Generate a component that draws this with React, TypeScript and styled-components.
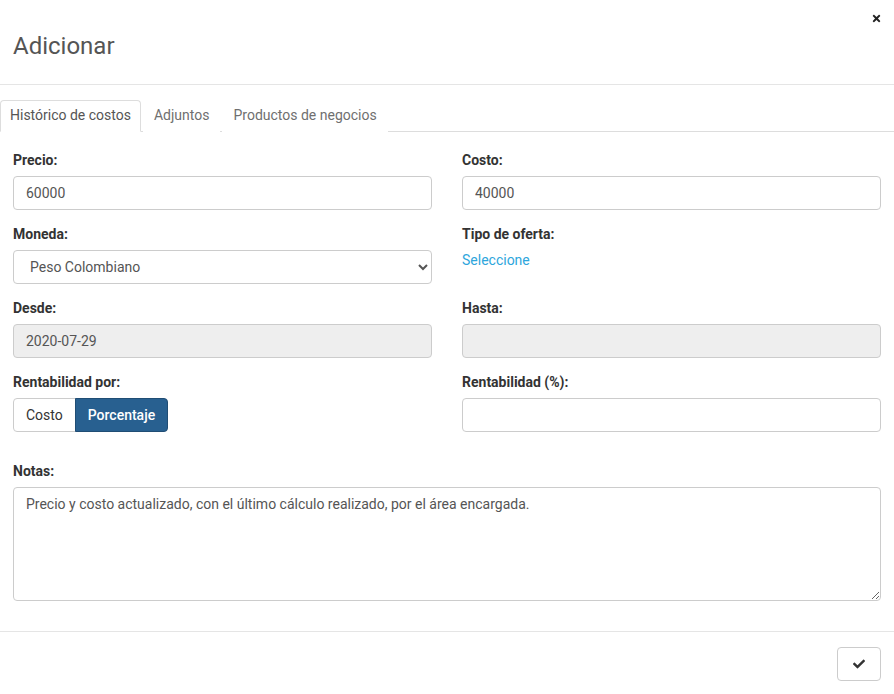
import React from "react";
import styled, { createGlobalStyle } from "styled-components";
import { FaCheck, FaTimes } from "react-icons/fa";

const GlobalStyle = createGlobalStyle`
  body {
    margin: 0;
    background: #fff;
    font-family: Roboto, "Liberation Sans", Arial, sans-serif;
    font-size: 14px;
    line-height: 20px;
    color: #333;
  }
  * { box-sizing: border-box; }
`;

const Modal = styled.div`
  width: 894px;
  background: #fff;
`;

const Header = styled.div`
  position: relative;
  padding: 32px 13px 24px;
  height: 85px;
  border-bottom: 1px solid #e5e5e5;
`;

const Title = styled.h4`
  margin: 0;
  font-size: 24px;
  line-height: 28px;
  font-weight: 400;
  color: #555;
`;

const Close = styled.button`
  position: absolute;
  top: 13px;
  right: 12px;
  padding: 0;
  border: 0;
  background: none;
  color: #222;
  display: flex;
  cursor: pointer;
`;

const Tabs = styled.ul`
  display: flex;
  list-style: none;
  margin: 15px 0 0;
  padding: 0;
  border-bottom: 1px solid #ddd;
`;

const Tab = styled.li<{ $active?: boolean }>`
  margin-right: 2px;
  margin-bottom: -1px;
  padding: ${p => (p.$active ? "4px 9px 6px" : "4px 10px 6px")};
  border: 1px solid ${p => (p.$active ? "#ddd" : "transparent")};
  border-bottom-color: ${p => (p.$active ? "#fff" : "transparent")};
  border-radius: 4px 4px 0 0;
  background: #fff;
  color: ${p => (p.$active ? "#555" : "#6f6f6f")};
  cursor: pointer;
`;

const Body = styled.div`
  padding: 18px 13px 16px;
`;

const Grid = styled.div`
  display: grid;
  grid-template-columns: 1fr 1fr;
  column-gap: 30px;
`;

const Field = styled.div<{ $wide?: boolean }>`
  grid-column: ${p => (p.$wide ? "1 / -1" : "auto")};
  margin-bottom: 14px;
  margin-top: ${p => (p.$wide ? "15px" : "0")};
`;

const Label = styled.label`
  display: block;
  margin-bottom: 6px;
  font-weight: 700;
  color: #333;
`;

const Input = styled.input`
  display: block;
  width: 100%;
  height: 34px;
  padding: 6px 12px;
  border: 1px solid #ccc;
  border-radius: 4px;
  font: inherit;
  color: #555;
  background: #fff;

  &:disabled {
    background: #eee;
  }
`;

const Select = styled.select`
  display: block;
  width: 100%;
  height: 34px;
  padding: 6px 8px 6px 12px;
  border: 1px solid #ccc;
  border-radius: 4px;
  font: inherit;
  color: #555;
  background: #fff;
`;

const LinkText = styled.a`
  display: block;
  color: #2ea6dc;
  text-decoration: none;
  cursor: pointer;
`;

const BtnGroup = styled.div`
  display: flex;
`;

const Toggle = styled.button<{ $active?: boolean }>`
  height: 34px;
  padding: 6px 12px;
  font: inherit;
  font-weight: ${p => (p.$active ? 500 : 400)};
  color: ${p => (p.$active ? "#fff" : "#333")};
  background: ${p => (p.$active ? "#286090" : "#fff")};
  border: 1px solid ${p => (p.$active ? "#204d74" : "#ccc")};
  border-radius: 0;
  cursor: pointer;

  &:first-child {
    border-radius: 4px 0 0 4px;
  }
  &:last-child {
    border-radius: 0 4px 4px 0;
    margin-left: -1px;
  }
`;

const TextArea = styled.textarea`
  display: block;
  width: 100%;
  height: 114px;
  padding: 6px 12px;
  border: 1px solid #ccc;
  border-radius: 4px;
  font: inherit;
  color: #555;
`;

const Footer = styled.div`
  display: flex;
  justify-content: flex-end;
  padding: 15px 13px;
  border-top: 1px solid #e5e5e5;
`;

const IconButton = styled.button`
  width: 44px;
  height: 34px;
  display: flex;
  align-items: center;
  justify-content: center;
  border: 1px solid #ccc;
  border-radius: 4px;
  background: #fff;
  color: #333;
  cursor: pointer;
`;

export default function App() {
  return (
    <Modal>
      <GlobalStyle />
      <Header>
        <Title>Adicionar</Title>
        <Close>
          <FaTimes size={11} />
        </Close>
      </Header>

      <Tabs>
        <Tab $active>Histórico de costos</Tab>
        <Tab>Adjuntos</Tab>
        <Tab>Productos de negocios</Tab>
      </Tabs>

      <Body>
        <Grid>
          <Field>
            <Label>Precio:</Label>
            <Input defaultValue="60000" />
          </Field>
          <Field>
            <Label>Costo:</Label>
            <Input defaultValue="40000" />
          </Field>

          <Field>
            <Label>Moneda:</Label>
            <Select defaultValue="cop">
              <option value="cop">Peso Colombiano</option>
            </Select>
          </Field>
          <Field>
            <Label>Tipo de oferta:</Label>
            <LinkText>Seleccione</LinkText>
          </Field>

          <Field>
            <Label>Desde:</Label>
            <Input disabled defaultValue="2020-07-29" />
          </Field>
          <Field>
            <Label>Hasta:</Label>
            <Input disabled />
          </Field>

          <Field>
            <Label>Rentabilidad por:</Label>
            <BtnGroup>
              <Toggle>Costo</Toggle>
              <Toggle $active>Porcentaje</Toggle>
            </BtnGroup>
          </Field>
          <Field>
            <Label>Rentabilidad (%):</Label>
            <Input />
          </Field>

          <Field $wide>
            <Label>Notas:</Label>
            <TextArea defaultValue="Precio y costo actualizado, con el último cálculo realizado, por el área encargada." />
          </Field>
        </Grid>
      </Body>

      <Footer>
        <IconButton>
          <FaCheck size={12} />
        </IconButton>
      </Footer>
    </Modal>
  );
}
